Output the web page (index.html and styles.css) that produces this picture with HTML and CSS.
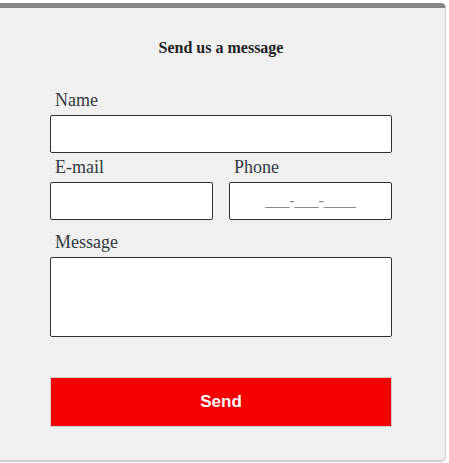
FILE: index.html
```html
<!DOCTYPE html>
<html>
<head>
<meta charset="utf-8">
<link rel="stylesheet" href="styles.css">
</head>
<body>
<form class="card">
  <h2 class="title">Send us a message</h2>
  <div class="field name">
    <label class="label">Name</label>
    <input class="input" type="text">
  </div>
  <div class="row">
    <div class="field">
      <label class="label">E-mail</label>
      <input class="input" type="text">
    </div>
    <div class="field">
      <label class="label">Phone</label>
      <input class="input phone" type="text" placeholder="___-___-____">
    </div>
  </div>
  <div class="field msg">
    <label class="label">Message</label>
    <textarea class="input area"></textarea>
  </div>
  <button class="send" type="button">Send</button>
</form>
</body>
</html>
```
FILE: styles.css
```css
html, body {
  margin: 0;
  padding: 0;
  background: #ffffff;
  overflow: hidden;
}
body {
  padding-top: 3px;
}
.card {
  box-sizing: border-box;
  width: 450px;
  margin-left: -4px;
  height: 459px;
  background: #f0f0f0;
  border-top: 5px solid #858585;
  border-right: 1px solid #cfcfcf;
  border-bottom: 2px solid #cfcfcf;
  border-radius: 0 5px 5px 0;
  padding: 0 53px 0 54px;
  font-family: "Liberation Serif", serif;
}
.title {
  margin: 0;
  padding-top: 30px;
  height: 48px;
  box-sizing: border-box;
  text-align: center;
  font-size: 16px;
  line-height: 20px;
  font-weight: bold;
  color: #222;
}
.field {
  display: flex;
  flex-direction: column;
}
.label {
  font-size: 18px;
  line-height: 24px;
  color: #333a40;
  padding-left: 5px;
  margin-bottom: 3px;
}
.name {
  margin-top: 32px;
}
.input {
  box-sizing: border-box;
  height: 38px;
  width: 100%;
  margin: 0;
  border: 1px solid #2e3236;
  border-radius: 2px;
  background: #fff;
  font-family: "Liberation Serif", serif;
  font-size: 16px;
}
.row {
  display: grid;
  grid-template-columns: 163px 163px;
  column-gap: 16px;
  margin-top: 2px;
}
.phone {
  text-align: center;
}
.phone::placeholder {
  color: #8a8a8a;
}
.msg {
  margin-top: 10px;
}
.area {
  height: 80px;
  resize: none;
}
.send {
  display: block;
  box-sizing: border-box;
  width: 100%;
  height: 50px;
  margin-top: 40px;
  background: #f50000;
  border: 1px solid #d0d0d0;
  color: #fff;
  font-family: "Liberation Sans", Arial, sans-serif;
  font-weight: bold;
  font-size: 17px;
}
```
